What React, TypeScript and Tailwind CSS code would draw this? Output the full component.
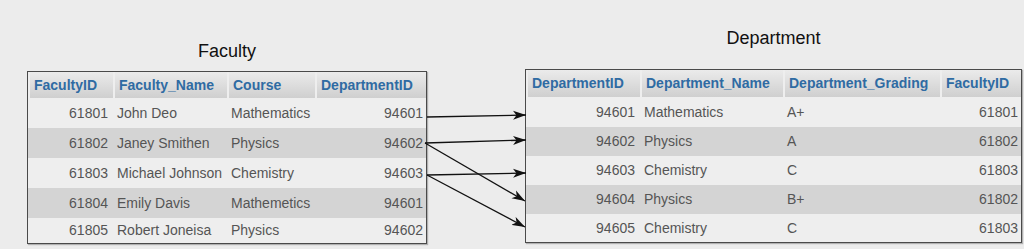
import React from 'react';

type Row = string[];

interface TableProps {
  widths: number[];
  headers: string[];
  rows: Row[];
  rowHeights: string[];
  headerH: string;
}

const facultyRows: Row[] = [
  ['61801', 'John Deo', 'Mathematics', '94601'],
  ['61802', 'Janey Smithen', 'Physics', '94602'],
  ['61803', 'Michael Johnson', 'Chemistry', '94603'],
  ['61804', 'Emily Davis', 'Mathemetics', '94601'],
  ['61805', 'Robert Joneisa', 'Physics', '94602'],
];

const departmentRows: Row[] = [
  ['94601', 'Mathematics', 'A+', '61801'],
  ['94602', 'Physics', 'A', '61802'],
  ['94603', 'Chemistry', 'C', '61803'],
  ['94604', 'Physics', 'B+', '61802'],
  ['94605', 'Chemistry', 'C', '61803'],
];

// first and last columns hold ids, right aligned
const cellAlign = (j: number) => {
  if (j === 0) return 'justify-end pr-[5px]';
  if (j === 3) return 'justify-end pr-[3px]';
  return 'pl-[4px]';
};

const DataTable: React.FC<TableProps> = ({ widths, headers, rows, rowHeights, headerH }) => {
  const cols = widths.map((w) => `${w}px`).join(' ');
  return (
    <div className="border border-[#4a4a4a] bg-[#eeeeee] shadow-[1px_1px_1px_rgba(0,0,0,0.25)]">
      {/* header */}
      <div className={`grid ${headerH}`} style={{ gridTemplateColumns: cols }}>
        {headers.map((h) => (
          <div
            key={h}
            className="flex items-center pl-[6px] bg-gradient-to-b from-[#ebebeb] to-[#cfcfcf] shadow-[inset_2px_0_0_#eeeeee] text-[14px] font-bold text-[#2f6ba3] whitespace-nowrap"
          >
            {h}
          </div>
        ))}
      </div>
      {/* rows */}
      {rows.map((row, i) => (
        <div
          key={i}
          className={`grid ${rowHeights[i]} ${i % 2 === 1 ? 'bg-[#d4d4d4]' : 'bg-[#eeeeee]'}`}
          style={{ gridTemplateColumns: cols }}
        >
          {row.map((cell, j) => (
            <div
              key={j}
              className={`flex items-center text-[14px] text-[#555555] whitespace-nowrap ${cellAlign(j)}`}
            >
              {cell}
            </div>
          ))}
        </div>
      ))}
    </div>
  );
};

export default function App() {
  return (
    <div
      className="relative w-[1024px] h-[249px] bg-[#ececec] flex overflow-hidden"
      style={{ fontFamily: '"Liberation Sans", Arial, sans-serif' }}
    >
      {/* Faculty */}
      <div className="ml-[27px] w-[400px] flex flex-col">
        <div className="mt-[40px] h-[22px] leading-[22px] text-[18px] text-[#111111] text-center">
          Faculty
        </div>
        <div className="mt-[9px]">
          <DataTable
            widths={[85, 114, 88, 111]}
            headers={['FacultyID', 'Faculty_Name', 'Course', 'DepartmentID']}
            rows={facultyRows}
            rowHeights={['h-[30px]', 'h-[30px]', 'h-[30px]', 'h-[30px]', 'h-[25px]']}
            headerH="h-[26px]"
          />
        </div>
      </div>

      {/* Department */}
      <div className="ml-[98px] w-[497px] flex flex-col">
        <div className="mt-[27px] h-[22px] leading-[22px] text-[18px] text-[#111111] text-center">
          Department
        </div>
        <div className="mt-[20px]">
          <DataTable
            widths={[114, 143, 157, 81]}
            headers={['DepartmentID', 'Department_Name', 'Department_Grading', 'FacultyID']}
            rows={departmentRows}
            rowHeights={['h-[30px]', 'h-[29px]', 'h-[29px]', 'h-[29px]', 'h-[28px]']}
            headerH="h-[27px]"
          />
        </div>
      </div>

      {/* relationship arrows */}
      <svg
        className="absolute inset-0 pointer-events-none"
        width="1024"
        height="249"
        viewBox="0 0 1024 249"
      >
        <defs>
          <marker
            id="head"
            markerUnits="userSpaceOnUse"
            markerWidth="14"
            markerHeight="10"
            refX="13"
            refY="5"
            orient="auto"
          >
            <path d="M0,0.5 L13,5 L0,9.5 L3.5,5 Z" fill="#111111" />
          </marker>
        </defs>
        <g stroke="#111111" strokeWidth="1.3" fill="none">
          <line x1="427" y1="117" x2="526" y2="115" markerEnd="url(#head)" />
          <line x1="425" y1="143" x2="526" y2="140" markerEnd="url(#head)" />
          <line x1="425" y1="143" x2="525" y2="201" markerEnd="url(#head)" />
          <line x1="427" y1="175" x2="526" y2="173" markerEnd="url(#head)" />
          <line x1="427" y1="175" x2="525" y2="227" markerEnd="url(#head)" />
        </g>
      </svg>
    </div>
  );
}
